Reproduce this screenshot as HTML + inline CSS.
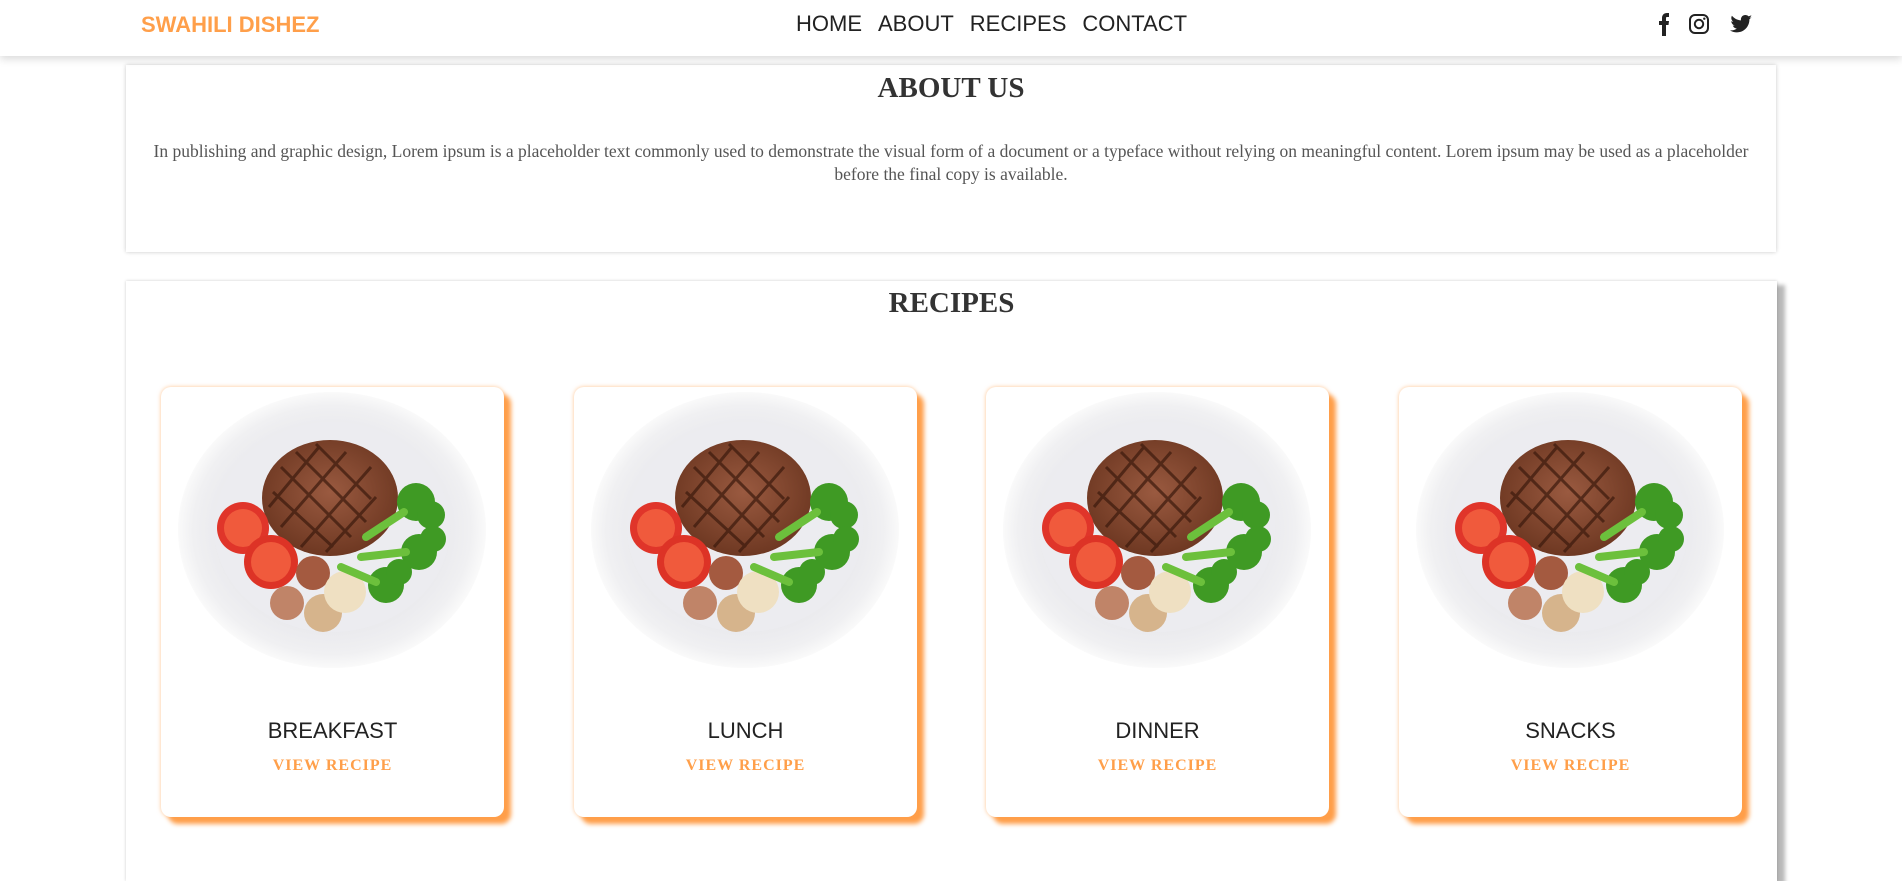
<!DOCTYPE html>
<html><head><meta charset="utf-8">
<style>
*{margin:0;padding:0;box-sizing:border-box}
body{width:1902px;height:863px;overflow:hidden;background:#fff;font-family:"Liberation Sans",sans-serif;position:relative}
.nav{position:absolute;left:0;top:0;width:1902px;height:56px;background:#fff;box-shadow:0 3px 8px rgba(0,0,0,.15);z-index:2}
.logo{position:absolute;left:141px;top:12px;font-size:22px;font-weight:bold;color:#ff9f4a}
.links{position:absolute;left:796px;top:11px;font-size:22px;color:#222}
.links span{margin-right:16px}
.icons{position:absolute;left:1655px;top:12px}
.about{position:absolute;left:126px;top:65px;width:1650px;height:187px;background:#fff;box-shadow:0 0 4px rgba(0,0,0,.22)}
h2{font-family:"Liberation Serif",serif;font-weight:bold;font-size:29px;color:#333;text-align:center}
.about h2{margin-top:7px}
.about p{position:absolute;left:26px;right:26px;top:75px;text-align:center;font-family:"Liberation Serif",serif;font-size:17.5px;line-height:23px;color:#555}
.rec{position:absolute;left:126px;top:281px;width:1651px;height:600px;background:#fff;box-shadow:0 0 3px rgba(0,0,0,.2),8px 4px 4px rgba(0,0,0,.28)}
.rec h2{margin-top:6px}
.card{position:absolute;top:387px;width:343px;height:430px;background:#fff;border-radius:10px;box-shadow:0 0 4px rgba(255,159,74,.6),7px 7px 5px #ff9f4a}
.t{position:absolute;top:718px;width:343px;text-align:center;font-size:22px;color:#222}
.v{position:absolute;top:757px;width:343px;text-align:center;font-family:"Liberation Serif",serif;font-weight:bold;font-size:16px;letter-spacing:1px;color:#ff9f4a}
</style></head><body>
<div class="nav">
<div class="logo">SWAHILI DISHEZ</div>
<div class="links"><span>HOME</span><span>ABOUT</span><span>RECIPES</span><span style="margin:0">CONTACT</span></div>
<svg class="icons" width="100" height="26" viewBox="0 0 100 26">
<path d="M7 24V13H4V9h3V6c0-3 2-5 5-5h2v4h-2c-1 0-1 .5-1 1.5V9h3l-.5 4H11v11z" fill="#222"/>
<rect x="35" y="3" width="18" height="18" rx="5" fill="none" stroke="#222" stroke-width="2"/>
<circle cx="44" cy="12" r="4.2" fill="none" stroke="#222" stroke-width="2"/>
<circle cx="49.3" cy="6.7" r="1.2" fill="#222"/>
<path d="M97 5c-.8.4-1.6.6-2.5.7.9-.6 1.6-1.4 1.9-2.4-.9.5-1.8.9-2.8 1.1C92.8 3.5 91.6 3 90.3 3c-2.5 0-4.4 2-4.4 4.4 0 .3 0 .7.1 1-3.7-.2-6.9-2-9.1-4.6-.4.7-.6 1.4-.6 2.2 0 1.5.8 2.9 2 3.7-.7 0-1.4-.2-2-.6 0 2.1 1.5 3.9 3.5 4.3-.6.2-1.3.2-2 .1.6 1.7 2.2 3 4.1 3-1.5 1.2-3.4 1.9-5.5 1.9H75c2 1.3 4.3 2 6.8 2 8.1 0 12.6-6.7 12.6-12.6v-.6c.9-.6 1.6-1.4 2.2-2.3z" fill="#222"/>
</svg>
</div>
<div class="about"><h2>ABOUT US</h2>
<p>In publishing and graphic design, Lorem ipsum is a placeholder text commonly used to demonstrate the visual form of a document or a typeface without relying on meaningful content. Lorem ipsum may be used as a placeholder before the final copy is available.</p></div>
<div class="rec"><h2>RECIPES</h2></div>

<div class="card" style="left:161px"></div>
<div class="card" style="left:574px"></div>
<div class="card" style="left:986px"></div>
<div class="card" style="left:1399px"></div>

<svg style="position:absolute;left:0;top:0" width="1902" height="863">
<defs>
<radialGradient id="pl" cx="50%" cy="50%" r="50%"><stop offset="0.7" stop-color="#e9e9ed"/><stop offset="0.9" stop-color="#f0f0f2"/><stop offset="1" stop-color="#fafafa"/></radialGradient>
<radialGradient id="st" cx="50%" cy="45%" r="55%"><stop offset="0" stop-color="#9a5a40"/><stop offset="1" stop-color="#6e3822"/></radialGradient>
<g id="plate">
<ellipse cx="171" cy="143" rx="154" ry="138" fill="url(#pl)"/>
<ellipse cx="171" cy="140" rx="118" ry="105" fill="#ececf0"/>
<ellipse cx="169" cy="111" rx="68" ry="58" fill="url(#st)"/>
<g stroke="#3c1a0d" stroke-width="3" opacity=".7">
<path d="M120 80l70 70M135 65l70 70M112 105l60 55M155 57l55 55M120 140l65-75M140 160l70-80M108 120l50-60M165 165l50-55"/></g>
<circle cx="82" cy="141" r="26" fill="#e0352a"/><circle cx="82" cy="141" r="19" fill="#f05a3c"/>
<circle cx="110" cy="175" r="27" fill="#dd3326"/><circle cx="110" cy="175" r="20" fill="#f05a3c"/>
<circle cx="152" cy="186" r="17" fill="#a45a40"/>
<circle cx="126" cy="216" r="17" fill="#c08468"/>
<circle cx="162" cy="226" r="19" fill="#d6b48c"/>
<circle cx="184" cy="205" r="21" fill="#efe0c2"/>
<g fill="#3f9a24"><circle cx="255" cy="115" r="19"/><circle cx="270" cy="128" r="14"/><circle cx="258" cy="165" r="18"/><circle cx="272" cy="152" r="13"/><circle cx="225" cy="198" r="18"/><circle cx="238" cy="185" r="13"/></g>
<g stroke="#6cc03c" stroke-width="8" stroke-linecap="round"><path d="M205 150l38-25M200 170l45-5M180 180l35 15"/></g>
</g>
</defs>
<use href="#plate" x="161" y="387"/>
<use href="#plate" x="574" y="387"/>
<use href="#plate" x="986" y="387"/>
<use href="#plate" x="1399" y="387"/>
</svg>

<div class="t" style="left:161px">BREAKFAST</div><div class="v" style="left:161px">VIEW RECIPE</div>
<div class="t" style="left:574px">LUNCH</div><div class="v" style="left:574px">VIEW RECIPE</div>
<div class="t" style="left:986px">DINNER</div><div class="v" style="left:986px">VIEW RECIPE</div>
<div class="t" style="left:1399px">SNACKS</div><div class="v" style="left:1399px">VIEW RECIPE</div>
</body></html>
